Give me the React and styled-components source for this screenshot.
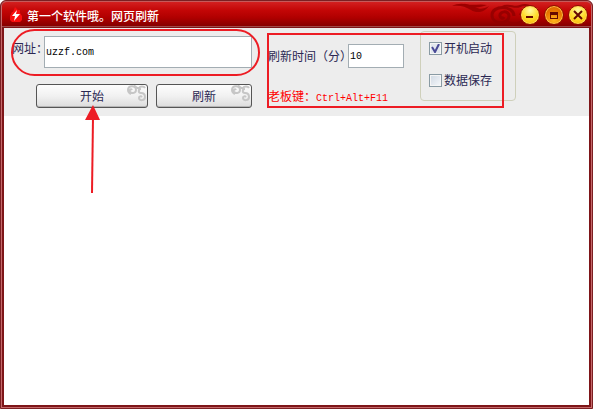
import React, { useState } from 'react';
import styled, { createGlobalStyle } from 'styled-components';

const GlobalStyle = createGlobalStyle`
  * {
    box-sizing: border-box;
  }

  body {
    margin: 0;
    background: #fff;
    font-family: "Noto Sans CJK SC", sans-serif;
    font-size: 12px;
    line-height: 16px;
    color: #2b2853;
  }
`;

const Window = styled.div`
  display: flex;
  flex-direction: column;
  min-height: 100vh;
  padding: 0 2px 2px;
  border: 1px solid #7c1f22;
  border-radius: 6px 6px 0 0;
  background: #7e1518;
  box-shadow: inset 0 0 0 1px #c4696b;
`;

const TitleBar = styled.header`
  display: flex;
  align-items: center;
  height: 26px;
  margin: 0 -1px;
  padding: 1px 3px 0 7px;
  border-top: 1px solid #c65a5a;
  border-bottom: 1px solid #a04a4a;
  border-radius: 5px 5px 0 0;
  background: linear-gradient(#d32020, #c30606 35%, #b00000 65%, #860000);
`;

const Title = styled.h1`
  flex: 1;
  margin: 0 0 0 4px;
  padding-top: 2px;
  font-size: 12px;
  font-weight: 500;
  color: #fff;
  white-space: nowrap;
`;

const CloudArt = styled.svg`
  flex: none;
  align-self: flex-start;
  margin: -1px -18px 0 0;
`;

const WindowButtons = styled.div`
  position: relative;
  display: flex;
  gap: 4px;
`;

const RoundButton = styled.button`
  display: flex;
  align-items: center;
  justify-content: center;
  width: 20px;
  height: 20px;
  padding: 0;
  border: 1px solid #8d1000;
  border-radius: 50%;
  background: ${({ $dark }) =>
    $dark
      ? 'radial-gradient(circle at 50% 80%, #ffb51c, #e87800 55%, #d45a00)'
      : 'radial-gradient(circle at 50% 25%, #fff9a0, #ffdc28 50%, #f8a800)'};
  box-shadow: inset 0 0 0 1px ${({ $dark }) => ($dark ? '#ffc04a' : '#ffd75a')};
`;

const Body = styled.main`
  display: flex;
  flex: 1;
  flex-direction: column;
  margin: 1px;
  background: #fff;
`;

const Toolbar = styled.form`
  display: flex;
  gap: 16px;
  height: 88px;
  padding: 3px 8px 0;
  background: #ededed;
`;

const AddressPanel = styled.div`
  position: relative;
  width: 240px;
  padding-top: 5px;
`;

const Field = styled.div`
  display: flex;
`;

const Label = styled.label`
  flex: none;
  width: ${({ $width }) => $width}px;
  padding-top: 4px;
  white-space: nowrap;
`;

const TextInput = styled.input`
  flex: 1;
  min-width: 0;
  height: ${({ $height }) => $height}px;
  padding: 0 1px;
  border: 1px solid #a3adb3;
  border-radius: 0;
  outline: none;
  background: #fff;
  color: #000;
  font-family: "Liberation Mono", monospace;
  font-size: 10px;
`;

const Actions = styled.div`
  display: flex;
  gap: 8px;
  margin: 16px 0 0 24px;
`;

const ActionButton = styled.button`
  position: relative;
  flex: ${({ $grow }) => $grow} 1 0;
  height: 24px;
  padding: 0;
  border: 1px solid #555;
  border-radius: 3px;
  background: linear-gradient(#fdfdfd, #f1f1f1 50%, #dcdcdc);
  box-shadow: inset 0 -1px 0 #b5b5b5;
  color: #2b2853;
  font: inherit;
`;

const ButtonArt = styled.svg`
  position: absolute;
  top: 0;
  right: 0;
`;

const RefreshPanel = styled.div`
  position: relative;
  display: flex;
  flex-direction: column;
  width: 136px;
  padding-top: 13px;
`;

const BossKey = styled.p`
  margin: 20px 0 0;
  color: #f00;
  white-space: nowrap;

  span {
    font-family: "Liberation Mono", monospace;
    font-size: 10px;
  }
`;

const OptionBox = styled.fieldset`
  display: flex;
  flex-direction: column;
  gap: 16px;
  width: 96px;
  height: 70px;
  min-width: 0;
  margin: 0;
  padding: 8px;
  border: 1px solid #cfd0bb;
  border-radius: 4px;
`;

const Option = styled.label`
  display: flex;
  align-items: center;
  gap: 2px;
  white-space: nowrap;
`;

const Checkbox = styled.input`
  appearance: none;
  flex: none;
  width: 13px;
  height: 13px;
  margin: 0;
  border: 1px solid #8a9ba4;
  background: linear-gradient(135deg, #cfd8e2, #f6f8fb);
  box-shadow: inset 0 0 0 1px #f5f5f5;

  &:checked {
    background: url("data:image/svg+xml,%3Csvg xmlns='http://www.w3.org/2000/svg' viewBox='0 0 11 11'%3E%3Cpath d='M2 4l3 5 4-8' fill='none' stroke='%234a4a96' stroke-width='2'/%3E%3C/svg%3E")
      #e2e7ee;
  }
`;

// Marcas rojas dibujadas encima de los controles
const AddressMark = styled.div`
  position: absolute;
  top: -2px;
  left: -1px;
  width: 249px;
  height: 47px;
  border: 2px solid #ed1c24;
  border-radius: 24px;
  pointer-events: none;
`;

const OptionsMark = styled.div`
  position: absolute;
  z-index: 1;
  top: 2px;
  left: -1px;
  width: 237px;
  height: 75px;
  border: 2px solid #ed1c24;
  pointer-events: none;
`;

const ArrowMark = styled.svg`
  position: absolute;
  z-index: 1;
  top: 20px;
  left: 47px;
  pointer-events: none;
`;

const Page = styled.section`
  flex: 1;
`;

const FlameLogo = () => (
  <svg width="14" height="16" viewBox="0 0 14 16" aria-hidden="true">
    <path d="M6 0l3 3 2 0 0 3 2 3 0 4-2 2-8 0-2-2 0-4 2-4 1 0z" fill="#f80f0f" />
    <path d="M8 3L3 9h3l-1 5 6-7H7z" fill="#fff" />
  </svg>
);

const Cloud = () => (
  <ButtonArt width="21" height="17" viewBox="0 0 21 17" fill="none" stroke="#c6c6c6" strokeWidth="2" aria-hidden="true">
    <path d="M6 5c-1-2-3 0-2 2 2 2 6 1 6-2 0-5-8-5-8 0 0 2 1 3 3 4" />
    <path d="M8 1c2 0 3 3 5 2 1-2 5-2 6 0" />
    <path d="M15 4c-3 0-3 4 0 4 3 0 4 2 4 4 0 4-6 4-6 1 0-2 2-2 3-1" />
  </ButtonArt>
);

const TitleCloud = () => (
  <CloudArt width="88" height="24" viewBox="0 0 88 24" fill="none" aria-hidden="true">
    <path d="M2 4c7-4 17-2 23 1 5 3 9 2 14-1-4 6-12 8-18 4C15 4 9 3 2 4z" fill="#9c0000" />
    <path d="M14 1c6 4 14 0 23 2-8 3-17 4-23-2z" fill="#9c0000" />
    <g stroke="#900000" strokeWidth="3" opacity="0.8">
      <path d="M64 14c0-11-22-11-22-1 0 10 17 10 17 1 0-6-10-5-9 0 0 2 3 3 4 1" />
      <path d="M52 5c7-4 12 2 18-1 5-2 9-1 12 2" strokeWidth="2" />
      <path d="M58 20c7 3 15 1 18-6 1-4-5-5-6-1" strokeWidth="2" />
    </g>
  </CloudArt>
);

const App = () => {
  const [direccion, setDireccion] = useState('uzzf.com');
  const [minutos, setMinutos] = useState('10');

  return (
    <>
      <GlobalStyle />
      <Window>
        <TitleBar>
          <FlameLogo />
          <Title>第一个软件哦。网页刷新</Title>
          <TitleCloud />
          <WindowButtons>
            <RoundButton type="button" aria-label="最小化">
              <svg width="10" height="10" viewBox="0 0 10 10">
                <path d="M1 6h7v2H1z" fill="#650a00" />
              </svg>
            </RoundButton>
            <RoundButton type="button" $dark aria-label="最大化">
              <svg width="10" height="10" viewBox="0 0 10 10" shapeRendering="crispEdges">
                <path d="M1 2h8v7H1zM2 5v3h6V5z" fill="#650a00" fillRule="evenodd" />
              </svg>
            </RoundButton>
            <RoundButton type="button" aria-label="关闭">
              <svg width="10" height="10" viewBox="0 0 10 10">
                <path d="M1 1l8 8M9 1L1 9" stroke="#650a00" strokeWidth="2" />
              </svg>
            </RoundButton>
          </WindowButtons>
        </TitleBar>

        <Body>
          <Toolbar onSubmit={(e) => e.preventDefault()}>
            <AddressPanel>
              <Field>
                <Label htmlFor="direccion" $width={32}>网址：</Label>
                <TextInput
                  id="direccion"
                  $height={32}
                  value={direccion}
                  onChange={(e) => setDireccion(e.target.value)}
                />
              </Field>
              <Actions>
                <ActionButton type="submit" $grow={7}>
                  开始
                  <Cloud />
                  <ArrowMark width="18" height="90" viewBox="0 0 18 90" aria-hidden="true">
                    <path d="M9 12L8 88" stroke="#ed1c24" strokeWidth="2" />
                    <path d="M9 0l7 15H1z" fill="#ed1c24" />
                  </ArrowMark>
                </ActionButton>
                <ActionButton type="button" $grow={6}>
                  刷新
                  <Cloud />
                </ActionButton>
              </Actions>
              <AddressMark />
            </AddressPanel>

            <RefreshPanel>
              <Field>
                <Label htmlFor="minutos" $width={80}>刷新时间（分）</Label>
                <TextInput
                  id="minutos"
                  $height={24}
                  value={minutos}
                  onChange={(e) => setMinutos(e.target.value)}
                />
              </Field>
              <BossKey>
                老板键：<span>Ctrl+Alt+F11</span>
              </BossKey>
              <OptionsMark />
            </RefreshPanel>

            <OptionBox>
              <Option>
                <Checkbox type="checkbox" defaultChecked />
                开机启动
              </Option>
              <Option>
                <Checkbox type="checkbox" />
                数据保存
              </Option>
            </OptionBox>
          </Toolbar>
          <Page />
        </Body>
      </Window>
    </>
  );
};

export default App;
